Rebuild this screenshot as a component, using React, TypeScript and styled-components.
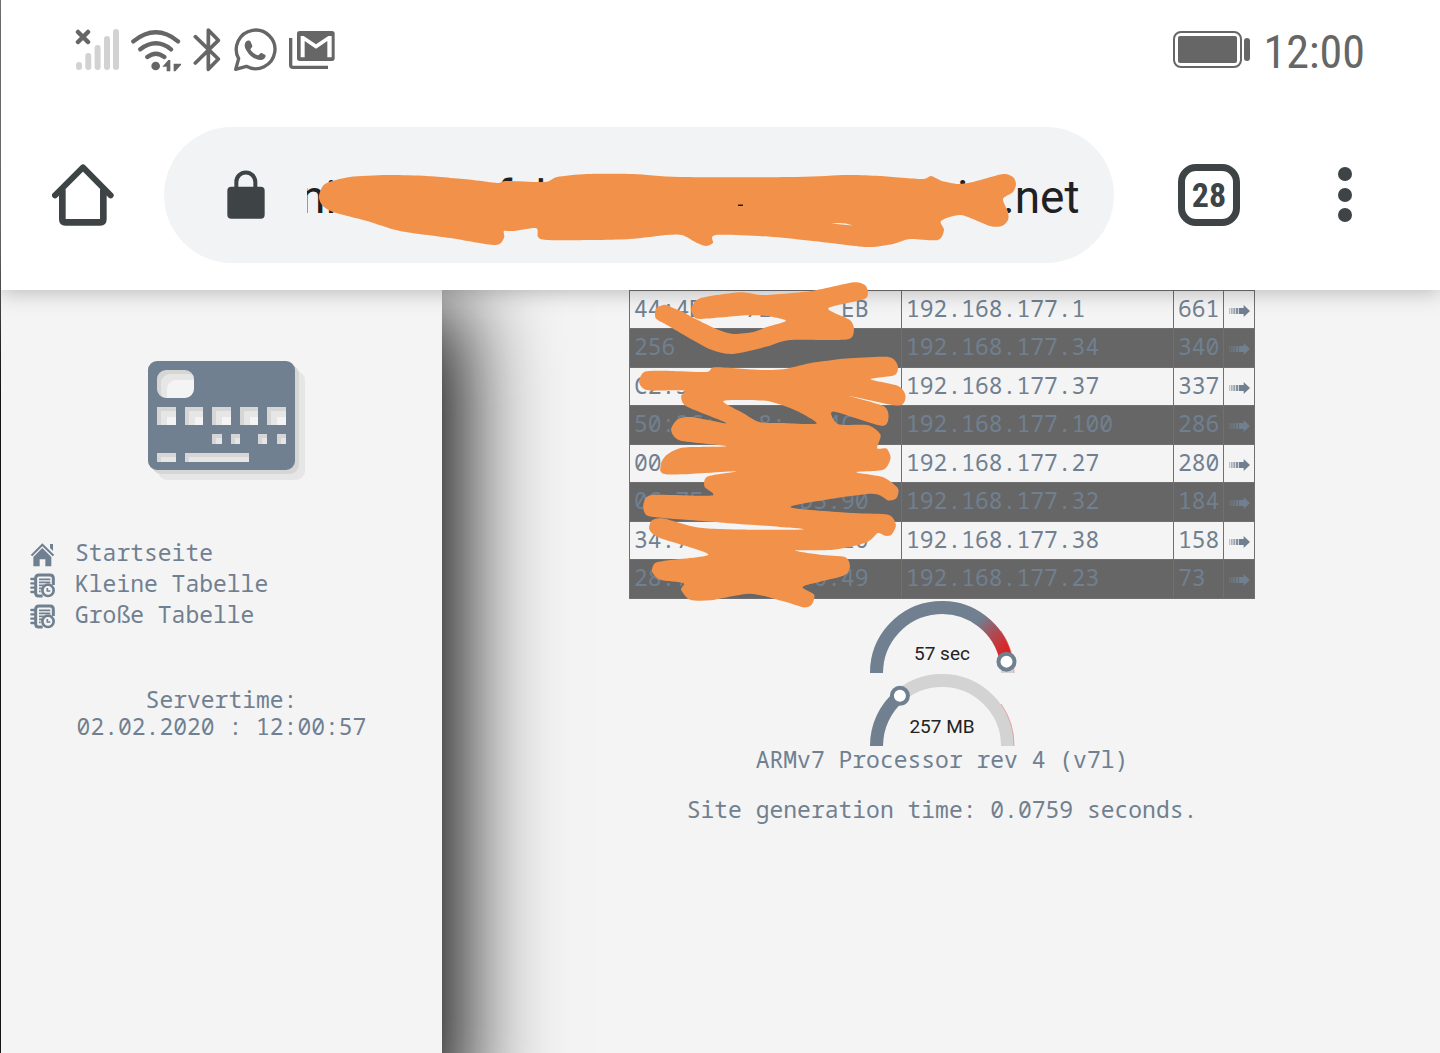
import React from "react";
import styled, { createGlobalStyle } from "styled-components";

const slate = "#708090";
const ink = "#3e4346";
const statusGrey = "#666666";
const marker = "#f2924a";

const GlobalStyle = createGlobalStyle`
  *, *::before, *::after { box-sizing: border-box; }
  body { margin: 0; background: #f4f4f4; }
`;

const Page = styled.div`
  min-height: 100vh;
  display: flex;
  flex-direction: column;
  border-left: 1px solid #777;
  font-family: "Noto Sans Mono", "DejaVu Sans Mono", monospace;
  font-size: 23px;
  line-height: 27px;
  color: ${slate};
`;

const Header = styled.header`
  position: relative;
  z-index: 1;
  background: #fff;
  box-shadow: 0 2px 20px rgba(0, 0, 0, 0.25);
`;

const StatusBar = styled.div`
  height: 100px;
  padding: 0 75px 0 74px;
  display: flex;
  align-items: center;
  justify-content: space-between;
  color: ${statusGrey};
`;

const StatusGroup = styled.div<{ $gap: number }>`
  display: flex;
  align-items: center;
  gap: ${(p) => p.$gap}px;
`;

const Clock = styled.time`
  padding-top: 4px;
  font: 400 46px/56px "Roboto Condensed", Roboto, sans-serif;
`;

const Toolbar = styled.div`
  height: 190px;
  padding: 0 88px 0 51px;
  display: flex;
  align-items: center;
`;

const IconButton = styled.button`
  display: flex;
  padding: 0;
  border: 0;
  background: none;
  color: ${ink};
`;

const TabButton = styled.button`
  width: 62px;
  height: 62px;
  margin-right: 98px;
  padding: 0;
  border: 7px solid ${ink};
  border-radius: 18px;
  background: none;
  color: ${ink};
  font: 700 34px/46px "Roboto Condensed", Roboto, sans-serif;
`;

const AddressBar = styled.label`
  position: relative;
  flex: 1;
  height: 136px;
  margin: 0 64px 0 50px;
  padding: 0 24px 0 63px;
  display: flex;
  align-items: center;
  gap: 42px;
  border-radius: 68px;
  background: #f1f3f4;
  color: ${ink};
`;

const AddressInput = styled.input`
  flex: 1;
  min-width: 0;
  padding: 4px 0 0;
  border: 0;
  outline: 0;
  background: none;
  color: #202124;
  font: 400 46px/60px Roboto, sans-serif;
  text-indent: -7px;
  white-space: pre;
`;

const AddressMarker = styled.svg`
  position: absolute;
  inset: 0;
  width: 100%;
  height: 100%;
`;

const Body = styled.div`
  flex: 1;
  display: flex;
`;

const Sidebar = styled.aside`
  flex: 0 0 441px;
  padding: 71px 0 0;
  display: flex;
  flex-direction: column;
  align-items: center;
  background: #f4f4f4;
  box-shadow: -14px 46px 90px 32px #000;
`;

const Nav = styled.nav`
  align-self: stretch;
  margin-top: 66px;
`;

const Menu = styled.ul`
  margin: 0;
  padding: 0 0 0 28px;
  list-style: none;
`;

const MenuLink = styled.a`
  display: flex;
  align-items: center;
  gap: 20px;
  height: 31px;
  color: inherit;
  text-decoration: none;

  svg {
    margin-top: 4px;
  }
`;

const ServerTime = styled.div`
  margin-top: 56px;
  display: flex;
  flex-direction: column;
  align-items: center;
`;

const Main = styled.main`
  flex: 1;
  padding-left: 2px;
  display: flex;
  flex-direction: column;
  align-items: center;
`;

const TableWrap = styled.div`
  position: relative;
`;

const TableMarker = styled.svg`
  position: absolute;
  z-index: 2;
  left: -9px;
  top: -10px;
  pointer-events: none;
`;

const Table = styled.table`
  width: 626px;
  table-layout: fixed;
  border-collapse: collapse;
`;

const Row = styled.tr<{ $dark: boolean }>`
  height: ${(p) => (p.$dark ? 39 : 38)}px;
  background: ${(p) => (p.$dark ? "#666" : "transparent")};
`;

const Cell = styled.td`
  padding: 0 3px 4px 4px;
  border: 1px solid #707070;
  white-space: pre;
  line-height: 30px;
`;

const Column = styled.col<{ $width: number }>`
  width: ${(p) => p.$width}px;
`;

const ArrowLink = styled.a`
  display: flex;
  justify-content: center;
  padding-top: 6px;
  color: inherit;
`;

const GaugeStack = styled.div`
  display: flex;
  flex-direction: column;
  padding-top: 1px;
`;

const Note = styled.p<{ $top: number }>`
  margin: ${(p) => p.$top}px 0 0;
`;

type Point = [number, number];

// Closed Catmull-Rom curve through the given points.
function curve(points: Point[]): string {
  const n = points.length;
  let d = `M${points[0][0]} ${points[0][1]}`;
  for (let i = 0; i < n; i++) {
    const a = points[(i - 1 + n) % n];
    const b = points[i];
    const c = points[(i + 1) % n];
    const e = points[(i + 2) % n];
    d += `C${b[0] + (c[0] - a[0]) / 8} ${b[1] + (c[1] - a[1]) / 8} ${c[0] - (e[0] - b[0]) / 8} ${c[1] - (e[1] - b[1]) / 8} ${c[0]} ${c[1]}`;
  }
  return d + "Z";
}

const addressStroke: Point[] = [
  [319, 196], [325, 184], [350, 177], [387, 175], [427, 176], [473, 180], [497, 183], [507, 181], [545, 182],
  [557, 177], [587, 174], [633, 174], [680, 177], [797, 177], [847, 175], [880, 176], [922, 179], [931, 176],
  [942, 181], [958, 184], [973, 182], [1003, 174], [1013, 177], [1016, 184], [1013, 192], [1003, 199],
  [1008, 212], [1008, 220], [1002, 226], [990, 226], [961, 215], [941, 221], [944, 230], [938, 240],
  [910, 239], [893, 244], [867, 247], [813, 241], [773, 237], [716, 235], [713, 243], [706, 246], [697, 243],
  [682, 235], [667, 235], [630, 239], [593, 240], [547, 240], [538, 237], [536, 228], [513, 231], [504, 231],
  [504, 238], [495, 245], [450, 238], [400, 231], [367, 221], [333, 212], [322, 205],
];

const firstRowStroke: Point[] = [
  [214, 85], [240, 55], [360, 37], [430, 45], [580, 32], [700, 7], [735, 15], [744, 36], [732, 58], [625, 85],
  [690, 120], [702, 150], [680, 179], [510, 180], [440, 200], [340, 222], [270, 208], [140, 135], [107, 115],
  [108, 85], [135, 74], [160, 84], [190, 97], [222, 115], [300, 152], [340, 162], [400, 156], [440, 141],
  [498, 122], [440, 108], [380, 106], [240, 117], [220, 105],
];

const restStroke: Point[] = [
  [57, 303], [75, 275], [150, 273], [260, 276], [285, 262], [420, 270], [490, 268], [570, 250], [680, 236],
  [805, 231], [833, 255], [825, 285], [752, 298], [835, 318], [857, 348], [835, 377], [690, 348], [790, 378],
  [806, 410], [785, 438], [640, 395], [655, 433], [745, 436], [782, 465], [772, 505], [800, 506], [812, 535],
  [790, 570], [710, 577], [790, 592], [834, 625], [830, 655], [805, 662], [750, 642], [512, 681], [700, 700],
  [805, 705], [828, 735], [815, 765], [795, 768], [774, 760], [740, 788], [640, 810], [525, 812], [600, 825],
  [675, 832], [690, 860], [670, 888], [550, 920], [583, 945], [575, 975], [550, 983], [490, 965], [390, 942],
  [270, 962], [210, 960], [183, 930], [190, 910], [120, 900], [96, 875], [105, 850], [140, 842], [265, 824],
  [120, 775], [88, 750], [95, 722], [130, 716], [240, 744], [400, 750], [550, 748], [300, 728], [100, 712],
  [72, 695], [72, 665], [100, 645], [275, 647], [253, 620], [262, 590], [350, 574], [140, 584], [122, 555],
  [140, 525], [190, 503], [318, 499], [180, 482], [153, 450], [175, 417], [220, 412], [320, 430], [200, 380],
  [183, 350], [192, 332], [90, 332], [65, 322],
];

const restHole: Point[] = [
  [310, 363], [430, 362], [490, 377], [540, 398], [590, 431], [500, 430], [420, 427], [370, 400],
];

const rows: [string, string, string][] = [
  ["44:4D   7E     EB", "192.168.177.1", "661"],
  ["256", "192.168.177.34", "340"],
  ["C2:5           8", "192.168.177.37", "337"],
  ["50:2C:   8:  :4C", "192.168.177.100", "286"],
  ["00", "192.168.177.27", "280"],
  ["0C:7F       D3:90", "192.168.177.32", "184"],
  ["34:7           10", "192.168.177.38", "158"],
  ["28:7         0:49", "192.168.177.23", "73"],
];

const SignalIcon = () => (
  <svg width="44" height="42" viewBox="0 0 44 42">
    <g stroke="#d2d2d2" strokeWidth="6" strokeLinecap="round">
      <path d="M4 36v2M13.300 27v11M22.600 19v19M32 10v28M41 3v35" />
    </g>
    <path d="M3 3l10 10M13 3L3 13" stroke="currentColor" strokeWidth="4.500" strokeLinecap="round" />
  </svg>
);

const WifiIcon = () => (
  <svg width="50" height="43" viewBox="213 39 150 129" fill="none" stroke="currentColor" strokeWidth="13" strokeLinecap="round">
    <path d="M220 76Q288 22 354 76M241 100Q288 64 333 100M262 123Q288 103 313 123" />
    <circle cx="287" cy="150" r="13" fill="currentColor" stroke="none" />
    <path d="M307 152L325 132H331V166H320V152ZM341 166V143H363V147L346 166Z" fill="currentColor" stroke="none" />
  </svg>
);

const BluetoothIcon = () => (
  <svg width="28" height="44" viewBox="396 38 84 132" fill="none" stroke="currentColor" strokeWidth="11" strokeLinecap="round" strokeLinejoin="round">
    <path d="M403 64L472 131L442 162V44L472 75L403 143" />
  </svg>
);

const ChatIcon = () => (
  <svg width="44" height="44" viewBox="519 38 132 132">
    <path d="M527 162L536 130A58 58 0 1 1 559 153Z" fill="none" stroke="currentColor" strokeWidth="10" strokeLinejoin="round" />
    <path d="M557 80C562 74 569 74 572 79L577 91C578 96 571 99 571 102C576 111 584 117 593 120C597 121 600 112 605 113L616 119C619 124 613 132 604 134C594 136 577 128 566 115C554 101 551 89 557 80Z" fill="currentColor" />
  </svg>
);

const MailIcon = () => (
  <svg width="46" height="40" viewBox="687 45 138 120">
    <path d="M692 69V150Q692 157 699 157H804" fill="none" stroke="currentColor" strokeWidth="10" />
    <rect x="711" y="48" width="113" height="90" rx="8" fill="currentColor" />
    <path d="M722 127V63H731L768 88L805 63H815V127H802V78L768 101L734 78V127Z" fill="#fff" />
  </svg>
);

const BatteryIcon = () => (
  <svg width="78" height="38" viewBox="0 0 78 38">
    <rect x="1" y="1" width="67" height="35" rx="7" fill="none" stroke="currentColor" strokeWidth="2" />
    <rect x="5" y="5" width="59" height="27" rx="2" fill="currentColor" />
    <rect x="71" y="7" width="6" height="23" rx="3" fill="currentColor" />
  </svg>
);

const HomeIcon = () => (
  <svg width="62" height="62" viewBox="65 132 186 186" fill="none" stroke="currentColor" strokeLinecap="round" strokeLinejoin="round">
    <path d="M74 226L158 142L241 226" strokeWidth="18" />
    <path d="M96 208V298Q96 307 105 307H210Q219 307 219 298V208" strokeWidth="20" strokeLinecap="butt" />
  </svg>
);

const LockIcon = () => (
  <svg width="38" height="50" viewBox="590 148 114 150">
    <rect x="591" y="198" width="112" height="96" rx="12" fill="currentColor" />
    <path d="M618 204V184A28 28 0 0 1 675 184V204" fill="none" stroke="currentColor" strokeWidth="12" />
  </svg>
);

const MoreIcon = () => (
  <svg width="14" height="56" viewBox="0 0 14 56" fill="currentColor">
    <circle cx="7" cy="7" r="7" />
    <circle cx="7" cy="28" r="7" />
    <circle cx="7" cy="48" r="7" />
  </svg>
);

const cardPath =
  "M9 0H138a9 9 0 0 1 9 9V100a9 9 0 0 1-9 9H9a9 9 0 0 1-9-9V9a9 9 0 0 1 9-9Z" +
  "M18 9H37a9 9 0 0 1 9 9V28a9 9 0 0 1-9 9H18a9 9 0 0 1-9-9V18a9 9 0 0 1 9-9Z" +
  "M9 46h19v18h-19ZM37 46h18v18h-18ZM64 46h19v18h-19ZM92 46h18v18h-18ZM119 46h19v18h-19Z" +
  "M64 73h10v10h-10ZM83 73h9v10h-9ZM110 73h9v10h-9ZM129 73h9v10h-9Z" +
  "M9 92h19v9h-19ZM37 92h64v9h-64Z";

const CardIcon = () => (
  <svg width="147" height="110" viewBox="0 0 147 110" overflow="visible" fillRule="evenodd">
    <path d={cardPath} fill="#e6e6e6" transform="translate(10 10)" />
    <path d={cardPath} fill="#d6d6d6" transform="translate(4 4)" />
    <path d={cardPath} fill={slate} />
  </svg>
);

const HouseIcon = () => (
  <svg width="26" height="25" viewBox="-3 0 78 75" fill="currentColor">
    <path d="M2 39L37 4L73 39L68 43L37 13L7 43Z" />
    <path d="M60 6H69V27L60 18Z" />
    <path d="M10 45L37 18L64 45V73H46V52H29V73H10Z" />
  </svg>
);

const NotebookIcon = () => (
  <svg width="26" height="25" viewBox="-3 0 78 75" fill="none" stroke="currentColor">
    <path d="M38 69H26Q17 69 17 60V16Q17 6 27 6H60Q70 6 70 16V36" strokeWidth="9" />
    <path d="M4 18H15M4 31H15M4 44H15M4 57H15" strokeWidth="7" strokeLinecap="round" />
    <path d="M27 19H61M27 28H61M27 37H42M27 46H36M27 55H32" strokeWidth="5" />
    <circle cx="54" cy="52" r="17" strokeWidth="8" />
    <path d="M52 45V54H61" strokeWidth="5" />
  </svg>
);

const ArrowIcon = () => (
  <svg width="22" height="14" viewBox="0 0 66 42" fill="currentColor">
    <path d="M0 12h4v18h-4Z" opacity=".4" />
    <path d="M6 12h5v18h-5Z" opacity=".55" />
    <path d="M13 12h6v18h-6Z" opacity=".7" />
    <path d="M21 12h7v18h-7Z" opacity=".85" />
    <path d="M30 12H44V3L63 21L44 39V30H30Z" />
  </svg>
);

type GaugeProps = { label: string; angle: number; hot: boolean };

// Half ring; angle is the knob's place in degrees, measured from the right end.
const Gauge = ({ label, angle, hot }: GaugeProps) => {
  const rad = (angle * Math.PI) / 180;
  const x = 73 + 65.5 * Math.cos(rad);
  const y = 73 - 65.5 * Math.sin(rad);
  return (
    <svg width="147" height="73" viewBox="0 0 147 73" overflow="visible" role="img" aria-label={label}>
      <defs>
        <linearGradient id="heat" gradientUnits="userSpaceOnUse" x1="110" y1="20" x2="138" y2="52">
          <stop offset="0" stopColor={slate} />
          <stop offset="0.500" stopColor="#b04850" />
          <stop offset="1" stopColor="#e02020" />
        </linearGradient>
      </defs>
      <g fill="none">
        <path d="M7.500 73A65.500 65.500 0 0 1 138.500 73" stroke="#d3d3d3" strokeWidth="13" />
        <path d="M132 31A72 72 0 0 1 145 73" stroke="#e9a0a0" strokeWidth="1" />
        <path d={`M7.500 73A65.500 65.500 0 0 1 ${x} ${y}`} stroke={hot ? "url(#heat)" : slate} strokeWidth="13" />
      </g>
      <circle cx={x} cy={y} r="8" fill="#fff" stroke={slate} strokeWidth="4" />
      <text x="73" y="60" textAnchor="middle" fontFamily="Roboto, sans-serif" fontSize="19" fill="#222">
        {label}
      </text>
    </svg>
  );
};

const menu = [
  { label: "Startseite", Icon: HouseIcon },
  { label: "Kleine Tabelle", Icon: NotebookIcon },
  { label: "Große Tabelle", Icon: NotebookIcon },
];

const gap = (n: number) => "\u00a0".repeat(n);
const address = "ni" + gap(14) + "f" + gap(2) + "l" + gap(36) + "i" + gap(3) + ".net";

export default function App() {
  return (
    <Page>
      <GlobalStyle />
      <Header>
        <StatusBar>
          <StatusGroup $gap={12}>
            <SignalIcon />
            <WifiIcon />
            <BluetoothIcon />
            <ChatIcon />
            <MailIcon />
          </StatusGroup>
          <StatusGroup $gap={12}>
            <BatteryIcon />
            <Clock>12:00</Clock>
          </StatusGroup>
        </StatusBar>
        <Toolbar>
          <IconButton aria-label="Home">
            <HomeIcon />
          </IconButton>
          <AddressBar>
            <LockIcon />
            <AddressInput aria-label="Address" defaultValue={address} />
            <AddressMarker viewBox="164 127 950 136">
              <path d={curve(addressStroke)} fill={marker} />
              <path d="M831 223.500Q843 222 853 225.500Q842 224.500 831 223.500Z" fill="#f1f3f4" />
              <path d="M738 204.500h5v1.500h-5Z" fill="#222" />
            </AddressMarker>
          </AddressBar>
          <TabButton aria-label="Open tabs">28</TabButton>
          <IconButton aria-label="More">
            <MoreIcon />
          </IconButton>
        </Toolbar>
      </Header>
      <Body>
        <Sidebar>
          <CardIcon />
          <Nav>
            <Menu>
              {menu.map(({ label, Icon }) => (
                <li key={label}>
                  <MenuLink href="#">
                    <Icon />
                    {label}
                  </MenuLink>
                </li>
              ))}
            </Menu>
          </Nav>
          <ServerTime>
            <span>Servertime:</span>
            <time>02.02.2020 : 12:00:57</time>
          </ServerTime>
        </Sidebar>
        <Main>
          <TableWrap>
            <Table>
              <colgroup>
                <Column $width={272} />
                <Column $width={272} />
                <Column $width={50} />
                <Column $width={31} />
              </colgroup>
              <tbody>
                {rows.map(([mac, ip, count], i) => (
                  <Row key={ip} $dark={i % 2 === 1}>
                    <Cell>{mac}</Cell>
                    <Cell>{ip}</Cell>
                    <Cell>{count}</Cell>
                    <Cell>
                      <ArrowLink href="#" aria-label={`Details ${ip}`}>
                        <ArrowIcon />
                      </ArrowLink>
                    </Cell>
                  </Row>
                ))}
              </tbody>
            </Table>
            <TableMarker width="300" height="333" viewBox="0 0 900 1000" fill={marker}>
              <path d={curve(firstRowStroke)} />
              <path d={curve(restStroke) + curve(restHole)} fillRule="evenodd" />
            </TableMarker>
          </TableWrap>
          <GaugeStack>
            <Gauge label="57 sec" angle={10} hot />
            <Gauge label="257 MB" angle={130} hot={false} />
          </GaugeStack>
          <Note $top={0}>ARMv7 Processor rev 4 (v7l)</Note>
          <Note $top={23}>Site generation time: 0.0759 seconds.</Note>
        </Main>
      </Body>
    </Page>
  );
}
